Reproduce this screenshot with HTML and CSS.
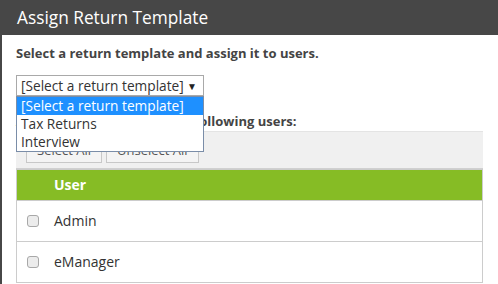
FILE: index.html
```html
<!DOCTYPE html>
<html>
<head>
<meta charset="utf-8">
<link rel="stylesheet" href="styles.css">
</head>
<body>
<div class="dialog">
  <div class="title">Assign Return Template</div>
  <div class="panel">
    <p class="lead">Select a return template and assign it to users.</p>
    <div class="picker">
      <div class="select">
        <span>[Select a return template]</span>
        <span class="arrow">&#9660;</span>
      </div>
      <ul class="options">
        <li class="on">[Select a return template]</li>
        <li>Tax Returns</li>
        <li>Interview</li>
      </ul>
    </div>
    <p class="lead second">Assign this template to the following users:</p>
    <div class="toolbar">
      <button type="button">Select All</button>
      <button type="button">Unselect All</button>
    </div>
    <table class="users">
      <tr><th class="chk"></th><th>User</th></tr>
      <tr><td class="chk"><span class="box"></span></td><td>Admin</td></tr>
      <tr><td class="chk"><span class="box"></span></td><td>eManager</td></tr>
    </table>
  </div>
</div>
</body>
</html>
```

FILE: styles.css
```css
body {
	margin:0;
	background-color:#fff;
	font-family:"Open Sans", "Noto Sans", sans-serif;
	color:#333;
}
.title {
	height:35px;
	line-height:35px;
	padding-left:17px;
	background-color:#474747;
	color:#fff;
	font-size:17.3px;
}
.panel {
	border-left:2px solid #474747;
	padding:0 15px 10px 14px;
}
.lead {
	margin:0;
	padding-top:8px;
	font-size:13px;
	font-weight:bold;
	line-height:20px;
	color:#444;
}
.picker {
	position:relative;
	margin-top:12px;
	width:188px;
}
.select {
	display:flex;
	justify-content:space-between;
	align-items:center;
	height:19px;
	padding:0 6px 0 4px;
	border:1px solid #a9a9a9;
	font-size:13.7px;
	color:#333;
	white-space:nowrap;
}
.select .arrow {
	font-size:10px;
	color:#222;
}
.options {
	position:absolute;
	left:0;
	top:21px;
	width:186px;
	margin:0;
	padding:0;
	list-style:none;
	border:1px solid #7a8da8;
	background-color:#fff;
	font-size:13.7px;
	z-index:2;
}
.options li {
	height:18px;
	line-height:18px;
	padding-left:4px;
	white-space:nowrap;
}
.options li.on {
	background-color:#1e90ff;
	color:#fff;
}
.second {
	padding-top:15px;
}
.toolbar {
	display:flex;
	gap:4px;
	padding:4px 10px 5px 10px;
	background-color:#f0f0f0;
	border-top:1px solid #e4e4e4;
	border-bottom:1px solid #d0d0d0;
}
.toolbar button {
	height:27px;
	padding:0 10px;
	border:1px solid #c8c8c8;
	background-color:#f4f4f4;
	font-family:inherit;
	font-size:13px;
	color:#555;
}
.users {
	width:100%;
	border-collapse:collapse;
	border:1px solid #ccc;
	font-size:14px;
}
.users th {
	height:30px;
	line-height:18px;
	padding:0;
	background-color:#86bc25;
	color:#fff;
	text-align:left;
	font-weight:bold;
}
.users td {
	height:40px;
	line-height:18px;
	padding:0;
	border-top:1px solid #ccc;
}
.users .chk {
	width:27px;
	padding-left:10px;
}
.box {
	display:block;
	width:10px;
	height:10px;
	border:1px solid #a8a8a8;
	border-radius:3px;
	background-color:#ececec;
}
```
